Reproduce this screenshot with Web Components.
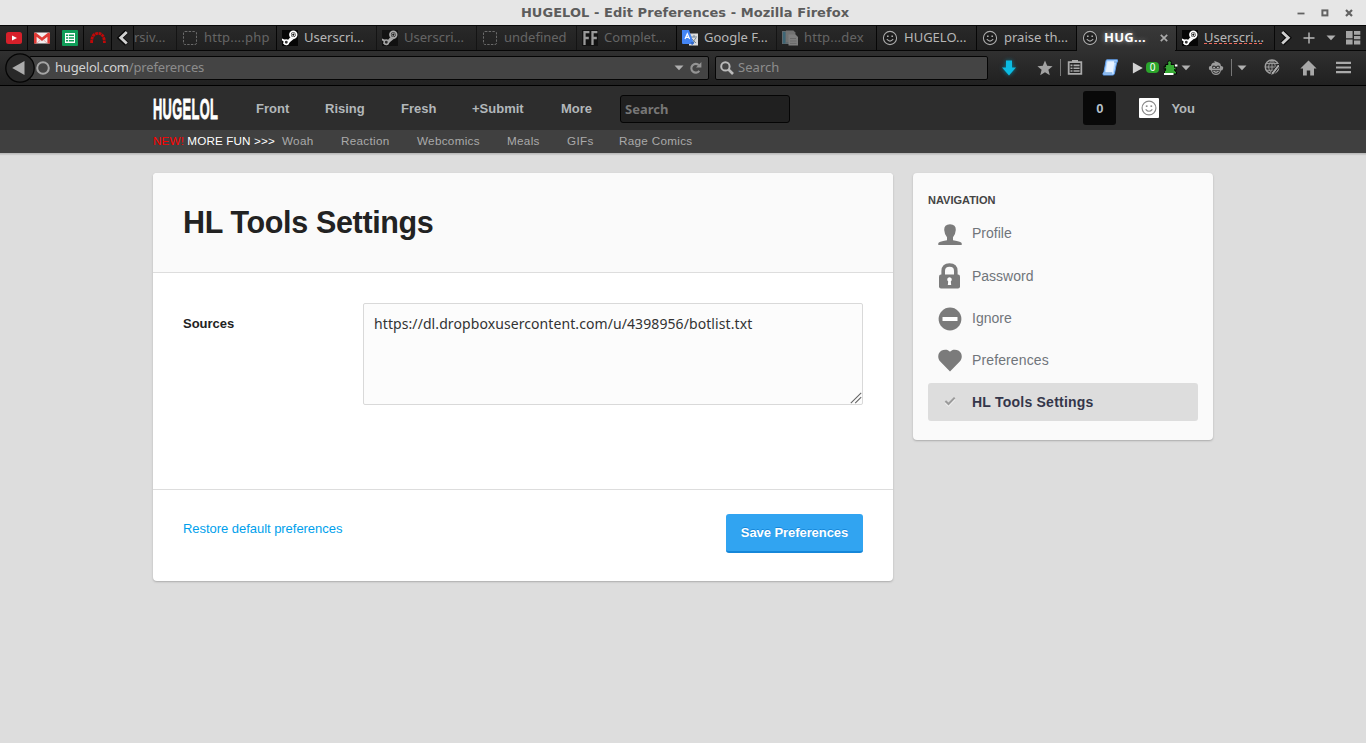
<!DOCTYPE html>
<html lang="en">
<head>
<meta charset="utf-8">
<title>HUGELOL - Edit Preferences</title>
<style>
html,body{margin:0;height:100%;overflow:hidden;background:#ddd;font-family:"Liberation Sans",Arial,sans-serif}
body{display:flex;flex-direction:column;width:1366px;height:743px}
</style>
</head>
<body>
<browser-chrome></browser-chrome>
<site-header></site-header>
<site-page></site-page>
<script>
const smile = '<circle cx="8" cy="8" r="6.6" fill="none" stroke="currentColor" stroke-width="1.1"/><rect x="5" y="5.5" width="1.6" height="1.5" fill="currentColor"/><rect x="9.4" y="5.5" width="1.6" height="1.5" fill="currentColor"/><path d="M4.8 9.2Q8 13 11.2 9.2" fill="none" stroke="currentColor" stroke-width="1.1"/>';
const ICONS = {
  youtube:[16,16,'<rect y="2" width="16" height="12" rx="2.5" fill="#d7202a"/><path d="M6 5.5 11 8 6 10.5Z" fill="#fff"/>'],
  gmail:[16,16,'<rect y="2.5" width="16" height="11" rx="1" fill="#f3eeee"/><path d="M0 3.5V13.5H2.6V6.8L8 11 13.4 6.8V13.5H16V3.5Q15 2 13.7 3L8 7.6 2.3 3Q1 2 0 3.5Z" fill="#df3a35"/><path d="M2.8 13.3 6.4 10M13.2 13.3 9.6 10" stroke="#d99" stroke-width=".8"/>'],
  sheets:[16,16,'<rect width="16" height="16" rx="1" fill="#109d58"/><rect x="3" y="3" width="10" height="10" fill="#fff"/><path d="M4 5.2h2.2M7 5.2h5M4 8h2.2M7 8h5M4 10.8h2.2M7 10.8h5" stroke="#109d58" stroke-width="1.5"/>'],
  arch:[16,16,'<path d="M1.6 13C1.6 6 4 3.4 8 3.4S14.4 6 14.4 13" fill="none" stroke="#c00808" stroke-width="2.8" stroke-dasharray="2.8 .6"/>'],
  prev:[12,16,'<path d="M9.8 1.5 3.2 7.8 9.8 14" fill="none" stroke="#080808" stroke-width="5"/><path d="M9.8 2 3.7 7.8 9.8 13.6" fill="none" stroke="#d0d0d0" stroke-width="2.8"/>'],
  next:[12,16,'<path d="M2.2 2 8.3 7.8 2.2 13.6" fill="none" stroke="#080808" stroke-width="5"/><path d="M2.2 2 8.3 7.8 2.2 13.6" fill="none" stroke="#d0d0d0" stroke-width="2.8"/>'],
  dotted:[16,16,'<rect x="1.5" y="1.5" width="13" height="13" rx="1.5" fill="none" stroke="#999" stroke-dasharray="2.4 1.3"/>'],
  steam:[16,16,'<rect width="16" height="16" fill="#060606"/><path d="M0 8.4 5.4 10.8 8 7.5 11.7 9 7.8 12.2 5 15.2 1 13.4 3 11.8 0 10.4Z" fill="#fff"/><circle cx="11.3" cy="4.7" r="3.3" fill="#111" stroke="#fff" stroke-width="1.8"/><circle cx="11.3" cy="4.7" r="1.5" fill="none" stroke="#fff"/><circle cx="4.3" cy="12.3" r="2.2" fill="#333" stroke="#fff" stroke-width="1.5"/>'],
  ff:[16,16,'<rect width="16" height="16" fill="#080808"/><path d="M2.5 15V2.1H7.4M2.5 8H6.8M10.5 15V2.1H15.4M10.5 8H14.8" fill="none" stroke="#e8e8e8" stroke-width="2.3"/>'],
  translate:[16,16,'<rect x="7" y="3.5" width="9" height="12" fill="#ddd"/><path d="M9 7h6M12 5v2M10 9l4 4M14 8l-4 5" stroke="#758693" stroke-width="1" fill="none"/><path d="M0 0H7L12 14H1Q0 14 0 13Z" fill="#4485f4"/><path d="M8.5 12 12.5 12 10 15.5Z" fill="#356ac3"/><path d="M3 9 5.3 3.8 7.6 9M3.8 7.4H6.8" stroke="#fff" stroke-width="1.2" fill="none"/>'],
  page:[16,16,'<path d="M0 1h11v13H0z" fill="#8a9aa2"/><path d="M1 2h2.4v11.5H1z" fill="#4f91aa"/><path d="M4 .6h7.4l2 2V12H4z" fill="#a5a5a5"/><path d="M6.5 4.5h7L16 7v8.6H6.5z" fill="#bbb"/><path d="M8 8.5h6M8 11h6.5M8 13.4h6.5" stroke="#999" stroke-width="1"/>'],
  smile:[16,16,'<circle cx="8" cy="8" r="7.6" fill="#191919" opacity=".7"/>'+smile],
  avatar:[20,20,'<rect width="20" height="20" rx="1" fill="#fff"/><g transform="translate(1.6 1.6) scale(1.05)" color="#8a8a8a">'+smile+'</g>'],
  close:[10,10,'<path d="M1.8 1.8 8.2 8.2M8.2 1.8 1.8 8.2" stroke="#aaa" stroke-width="1.7"/>'],
  plus:[12,12,'<path d="M6 .5V11.5M.5 6H11.5" stroke="#bbb" stroke-width="1.4"/>'],
  caret:[10,6,'<path d="M.5.5H9.5L5 5.2Z" fill="#b0b0b0"/>'],
  groups:[16,16,'<path d="M1 1h6.6v7.3H1zM9 1h6.3v3.8H9zM9 6h6.3v3.2H9zM1 9.6h6.6v5H1zM9 10.4h6.3v4.2H9z" fill="#a5a5a5"/>'],
  back:[30,30,'<circle cx="15" cy="15" r="14.2" fill="#292929" stroke="#050505" stroke-width="1.3"/><path d="M7.2 15 19.5 8V22Z" fill="#ababab"/>'],
  ring:[16,16,'<circle cx="8" cy="8" r="5.8" fill="none" stroke="#a5a5a5" stroke-width="2"/>'],
  reload:[12,12,'<path d="M9.3 8.8A4.4 4.4 0 1 1 9 3.3" fill="none" stroke="#949494" stroke-width="2.1"/><path d="M11.4 0V5.6H6Z" fill="#949494"/>'],
  search:[14,14,'<circle cx="5.4" cy="5.4" r="4.2" fill="none" stroke="#bbb" stroke-width="2"/><path d="M8.5 8.5 13 13" stroke="#bbb" stroke-width="2.7"/>'],
  down:[18,18,'<path d="M6 1.5h6v7h4L9 16.5 2 8.5h4z" fill="#0bbbe2"/>'],
  star:[16,16,'<path d="M8 .6 10.2 5.8 15.6 6.2 11.4 9.8 12.8 15.2 8 12.2 3.2 15.2 4.6 9.8 .4 6.2 5.8 5.8Z" fill="#a2a2a2"/>'],
  clip:[16,17,'<path d="M1.7 3.2h12.6v11.6H1.7z" fill="#222" stroke="#aaa" stroke-width="1.8"/><path d="M5 1h6v3H5z" fill="#aaa"/><path d="M3.5 6.4h2M6.5 6.4H12.6M3.5 9.2h2M6.5 9.2H12.6M3.5 12h2M6.5 12H12.6" stroke="#aaa" stroke-width="1.6"/>'],
  scroll:[17,17,'<path d="M4 2Q4 .8 5 .8H15.5Q16 3 14.5 4L12.4 14.8Q12 16 10.8 16H1.2Q.4 14 2 13Z" fill="#b5d8ff" stroke="#5d9ded"/><path d="M5.5 2.5h7L10.8 13.4H3.8z" fill="#e7f2ff"/><path d="M12 3h3M2 14h8" stroke="#699ed7"/>'],
  play:[11,12,'<path d="M.9.5 10.8 6 .9 11.5Z" fill="#d2d2d2"/>'],
  puzzle:[16,16,'<path d="M5 4.5 4.6 2.6Q4.6.8 6.5.8T8.4 2.6L8 4.5H11.5V7.5L13 6.5V10.5L11.5 9.5V10.4L13.5 12V14H1.5V11.5L2.6 10V8.5L1.2 9.4V6L2.6 7V4.5Z" fill="#37aa35" stroke="#050505"/><path d="M1 13H10.5V15H1zM11.8 4.4h2.6v2.2h-2.6z" fill="#fff"/>'],
  monkey:[16,16,'<path d="M3 6Q3 2.7 7 2.4L6 .7 10.5 2.6Q13 3.5 13 6Q16 6.3 15 9Q14.5 10.5 13 10.5 12 15 8 15T3 10.5Q.7 10.4.8 8T3 6Z" fill="#9b9b9b"/><path d="M4.2 6Q6 5 8 6.4 10 5 11.8 6V8.6H4.2ZM4 10.3h8Q11.4 13.8 8 13.8T4 10.3Z" fill="#333"/><path d="M5.3 7.4h1.6M9.1 7.4h1.6M5.5 11.5Q8 13 10.5 11.5" stroke="#ccc" fill="none"/>'],
  globe:[17,17,'<circle cx="8" cy="7.8" r="6.8" fill="#333" stroke="#a0a0a0" stroke-width="1.4"/><path d="M1 8h14M8 1v13M2.5 4.5h11M2.5 11.3h8M8 1Q1 8 8 14.5M8 1Q15 8 8 14.5" fill="none" stroke="#a0a0a0" stroke-width=".9"/><path d="M14 5 7.5 13.5 6.5 16.5 9.5 15.5 16 7Z" fill="#aaa" stroke="#222"/>'],
  home:[17,16,'<path d="M8.5.6 16.6 8.6H14V15.4H10.2V10.6H6.8V15.4H3V8.6H.4Z" fill="#a8a8a8"/>'],
  menu:[15,13,'<path d="M0 1.8h15M0 6.5h15M0 11.2h15" stroke="#aaa" stroke-width="2.2"/>'],
  wmin:[8,8,'<path d="M.5 4.5h7" stroke="#626262" stroke-width="1.8"/>'],
  wmax:[8,8,'<rect x="1.4" y="1.4" width="5" height="5" fill="none" stroke="#626262" stroke-width="2"/>'],
  wclose:[8,8,'<path d="M1 1 7 7M7 1 1 7" stroke="#626262" stroke-width="2.2"/>'],
  profile:[24,24,'<path d="M6.2 7Q6 1.4 12 1.3 18 1.4 17.8 7 17.5 11.5 15 14.2V17.2Q23.7 18.6 23.7 20.2V22H.3V20.2Q.3 18.6 9 17.2V14.2Q6.5 11.5 6.2 7Z" fill="#7b7b7b"/>'],
  lock:[24,26,'<path d="M5.2 13V8Q5.2 2 11.5 2T17.8 8V13" fill="none" stroke="#7b7b7b" stroke-width="3.6"/><rect x="1" y="11.6" width="21" height="13.8" rx="2" fill="#7b7b7b"/><path d="M11.5 14.2a2.3 2.3 0 0 1 1.3 4.2L13.2 22H9.8L10.2 18.4A2.3 2.3 0 0 1 11.5 14.2Z" fill="#fff"/>'],
  ignore:[24,24,'<circle cx="12" cy="12" r="11.4" fill="#7b7b7b"/><rect x="4.5" y="10" width="15" height="4" fill="#fff"/>'],
  heart:[24,24,'<path d="M12 2.7C14 .2 18 .1 20.8 1.8 24.4 4.4 24.6 9 22 12.2L12 22.4 2 12.2C-.6 9-.4 4.4 3.2 1.8 6 .1 10 .2 12 2.7Z" fill="#7b7b7b"/>'],
  check:[24,24,'<path d="M7.4 11.5 10.5 14.5 16.7 8.1" fill="none" stroke="#eee" stroke-width="2" transform="translate(0 1)"/><path d="M7.4 11 10.5 14 16.7 7.6" fill="none" stroke="#9b9b9b" stroke-width="2"/>'],
  grip:[12,12,'<path d="M.8 11.2 11.2.8M5.2 11.2 11.2 5.2" stroke="#666" stroke-width="1.1"/>']
};
const define = (name, render) => customElements.define(name, class extends HTMLElement {
  constructor(){ super(); this.attachShadow({mode:'open'}); }
  connectedCallback(){ this.shadowRoot.innerHTML = render(this); }
});

define('ui-icon', el => {
  const [w,h,body] = ICONS[el.getAttribute('name')];
  return `<style>:host{display:block;flex:none;width:${w}px;height:${h}px}svg{display:block}</style><svg width="${w}" height="${h}" viewBox="0 0 ${w} ${h}">${body}</svg>`;
});

define('browser-tab', el => `<style>
:host{display:flex;box-sizing:border-box;flex:none;width:100px;height:24px;align-items:center;gap:6px;padding-left:5px;border-left:1px solid #060606;color:#b7b7b7;background:linear-gradient(#292929,#202020);font:13px "Noto Sans",sans-serif;white-space:nowrap;overflow:hidden}
:host([dim]){color:#656565;border-color:#141414}
:host([dim]) ui-icon{opacity:.6}
:host([pin]){width:28px;border-left:0;border-right:1px solid #080808}
:host([active]){background:linear-gradient(#393939,#303030);color:#fff;font-weight:bold;text-shadow:0 0 5px #aaa}
:host([active]) span{letter-spacing:.3px}
:host([unread]) span{background:repeating-linear-gradient(90deg,#ef6a5c 0 3px,transparent 3px 5px) 0 17px/100% 1px no-repeat}
span{display:block;line-height:22px;height:24px}
ui-icon{color:#aaa}
ui-icon.x{margin-left:auto;margin-right:7px}
</style>${el.hasAttribute('icon')?`<ui-icon name="${el.getAttribute('icon')}"></ui-icon>`:''}${el.hasAttribute('pin')?'':'<span><slot></slot></span>'}${el.hasAttribute('active')?'<ui-icon class="x" name="close"></ui-icon>':''}`);

define('tab-strip', () => `<style>
:host{display:flex;height:24px;background:#070707;padding-top:1px;overflow:hidden}
browser-tab[pin]{padding-left:6px}
.scroll{display:flex;box-sizing:border-box;align-items:center;justify-content:center;width:22px;height:24px;background:#252525;border-right:1px solid #080808}
.cut{width:42px;padding-left:0;border:0}
.end{display:flex;flex:1;align-items:center;height:24px;background:#252525;border-left:1px solid #080808;padding-left:5px}
.end ui-icon:nth-child(2){margin-left:11px}.end ui-icon:nth-child(3){margin-left:11px}.end ui-icon:nth-child(4){margin-left:9px}
</style>
<browser-tab pin icon="youtube"></browser-tab><browser-tab pin icon="gmail"></browser-tab><browser-tab pin icon="sheets"></browser-tab><browser-tab pin icon="arch"></browser-tab>
<div class="scroll"><ui-icon name="prev"></ui-icon></div>
<browser-tab dim class="cut">rsiv...</browser-tab>
<browser-tab dim icon="dotted" style="letter-spacing:.2px">http....php</browser-tab><browser-tab icon="steam">Userscri...</browser-tab><browser-tab dim icon="steam">Userscri...</browser-tab><browser-tab dim icon="dotted">undefined</browser-tab><browser-tab dim icon="ff">Complet...</browser-tab><browser-tab icon="translate">Google F...</browser-tab><browser-tab dim icon="page" style="letter-spacing:.2px">http...dex</browser-tab><browser-tab icon="smile">HUGELO...</browser-tab><browser-tab icon="smile">praise th...</browser-tab><browser-tab active icon="smile">HUG...</browser-tab><browser-tab unread icon="steam" style="width:98px">Userscri...</browser-tab>
<div class="end"><ui-icon name="next"></ui-icon><ui-icon name="plus"></ui-icon><ui-icon name="caret"></ui-icon><ui-icon name="groups"></ui-icon></div>`);

define('nav-toolbar', () => `<style>
:host{display:flex;box-sizing:border-box;height:35px;background:linear-gradient(#303030,#202020);border-bottom:1px solid #000;padding:0 0 1px 5px;align-items:center;font:13px "Noto Sans",sans-serif;color:#d2d2d2}
.back{margin-right:-6px;z-index:1}
.field{display:flex;align-items:center;box-sizing:border-box;height:24px;background:#444;border:1px solid #050505;border-radius:2px}
.url{width:680px;padding-left:5px}
.url span,.find span{padding-left:4px}
.url span{letter-spacing:-.17px;line-height:21px;height:22px}
.find span{line-height:21px;height:22px;letter-spacing:.05px}
.url i{font-style:normal;color:#8c8c8c}
.url .c{margin-left:auto;margin-right:6px}.url .r{margin-right:6px}
.find{width:273px;margin-left:6px;padding-left:4px;color:#8d8d8d}
.tools{display:grid;grid-template-columns:37px 30px 35px 30px 14px 17px 18px 27px 23px 33px 36px 36px 28px;align-items:center;margin-left:12px}
.glow{filter:drop-shadow(0 0 2px #087d99)}
.div{border-left:1px solid #777;height:17px;padding-left:5px;display:flex;align-items:center}
.bar{position:relative}
.bar::before{content:"";position:absolute;left:-7px;top:0;width:1px;height:17px;background:#777}
b{display:block;width:13px;height:11px;line-height:11px;border-radius:4px;background:#2ba52b;color:#fff;text-align:center;font-size:10px;font-weight:normal}
</style>
<ui-icon class="back" name="back"></ui-icon>
<div class="field url"><ui-icon name="ring"></ui-icon><span>hugelol.com<i>/preferences</i></span><ui-icon class="c" name="caret"></ui-icon><ui-icon class="r" name="reload"></ui-icon></div>
<div class="field find"><ui-icon name="search"></ui-icon><span>Search</span></div>
<div class="tools"><ui-icon class="glow" name="down"></ui-icon><ui-icon name="star"></ui-icon><div class="bar"><ui-icon name="clip"></ui-icon></div><ui-icon name="scroll"></ui-icon><ui-icon name="play"></ui-icon><b>0</b><ui-icon name="puzzle"></ui-icon><ui-icon name="caret"></ui-icon><ui-icon name="monkey"></ui-icon><div class="div"><ui-icon name="caret"></ui-icon></div><ui-icon name="globe"></ui-icon><ui-icon name="home"></ui-icon><ui-icon name="menu"></ui-icon></div>`);

define('browser-chrome', () => `<style>
:host{display:block;flex:none;height:86px}
.title{display:grid;grid-template-columns:1fr auto 1fr;align-items:center;height:25px;background:#e6e6e6;color:#5c5c5c;font:bold 13px/25px "DejaVu Sans",sans-serif;padding-left:4px}
.title h1{grid-column:2;margin:0;font:inherit;letter-spacing:.05px}
.win{display:flex;justify-content:flex-end;gap:16px;padding-right:13px}
.seam{height:1px;background:linear-gradient(90deg,#070707 1077px,#303030 1077px 1175px,#070707 1175px)}
</style><div class="title"><h1>HUGELOL - Edit Preferences - Mozilla Firefox</h1><div class="win"><ui-icon name="wmin"></ui-icon><ui-icon name="wmax"></ui-icon><ui-icon name="wclose"></ui-icon></div></div>
<tab-strip></tab-strip><div class="seam"></div><nav-toolbar></nav-toolbar>`);

define('site-header', () => `<style>
:host{display:block;flex:none;background:#404040;box-shadow:0 1px 1px #bbb,0 2px 1px #ccc}
.top{height:44px;background:#2d2d2d;display:flex;align-items:center;padding:0 171px 0 153px}
.logo{width:65px;height:29px;flex:none;overflow:visible}
nav{display:grid}
.main{grid-template-columns:69px 76px 71px 89px 59px;margin-left:38px;font-weight:bold;font-size:13px;color:#b2b7ba}
.find{box-sizing:border-box;width:170px;height:28px;background:#202020;border:1px solid #050505;border-radius:3px;padding-left:4px;color:#777;font:bold 13px/27px "Noto Sans",sans-serif;margin-top:1px}
.count{width:33px;height:34px;border-radius:3px;background:#090909;margin-left:auto;margin-right:23px;text-align:center;font:bold 13px/36px "Liberation Sans",sans-serif;color:#b8c3cc}
.you{margin-left:12px;font:bold 13px "Liberation Sans",sans-serif;color:#b2b7ba}
.sub{height:23px;line-height:22px;display:flex;padding-left:153px;font-size:11.7px;color:#aaa;white-space:nowrap}
.promo{width:129px;color:#fff;letter-spacing:.12px}.promo em{font-style:normal;color:red}
.sub nav{grid-template-columns:59px 76px 90px 60px 52px 100px;letter-spacing:.3px}
</style><div class="top"><svg class="logo" viewBox="0 0 65 29"><text x="0" y="25" font-family="Liberation Sans" font-weight="bold" font-size="29.5" fill="#fff" stroke="#fff" stroke-width=".8" textLength="149" lengthAdjust="spacing" transform="scale(.435 1)">HUGELOL</text></svg>
<nav class="main"><span>Front</span><span>Rising</span><span>Fresh</span><span>+Submit</span><span>More</span></nav><div class="find">Search</div><div class="count">0</div><ui-icon name="avatar"></ui-icon><span class="you">You</span></div>
<div class="sub"><div class="promo"><em>NEW!</em> MORE FUN &gt;&gt;&gt;</div><nav><span>Woah</span><span>Reaction</span><span>Webcomics</span><span>Meals</span><span>GIFs</span><span>Rage Comics</span></nav></div>`);

define('settings-card', () => `<style>
:host{display:block;box-sizing:border-box;width:740px;height:408px;background:#fff;border-radius:4px;box-shadow:0 1px 2px #aaa;overflow:hidden;color:#222}
header{box-sizing:border-box;height:100px;background:#fafafa;border-bottom:1px solid #ddd;padding:0 30px}
h2{margin:0;font-size:30.5px;line-height:99px;letter-spacing:-.35px}
.body{display:grid;grid-template-columns:180px 500px;height:186px;padding:30px 30px 0}
label{font:bold 13px/42px "Liberation Sans",sans-serif}
.area{position:relative;height:102px}
.area ui-icon{position:absolute;right:1px;bottom:1px}
textarea{display:block;box-sizing:border-box;width:500px;height:102px;margin:0;border:1px solid #d9d9d9;border-radius:2px;background:#fcfcfc;padding:10px;font:14px/20px "Noto Sans",sans-serif;letter-spacing:.085px;color:#333;resize:none;outline:0}
footer{display:flex;justify-content:space-between;border-top:1px solid #ddd;padding:24px 30px}
a{color:#009fec;font-size:13px;line-height:30px;letter-spacing:-.04px}
button{width:137px;height:39px;box-sizing:border-box;padding:0;border:0;border-bottom:2px solid #1687d9;border-radius:3px;background:#31a4f1;color:#fff;font:bold 13px "Liberation Sans",sans-serif;letter-spacing:-.07px;text-shadow:0 -1px #1687d9}
</style><header><h2>HL Tools Settings</h2></header><div class="body"><label>Sources</label><div class="area"><textarea spellcheck="false">https://dl.dropboxusercontent.com/u/4398956/botlist.txt</textarea><ui-icon name="grip"></ui-icon></div></div><footer><a>Restore default preferences</a><button>Save Preferences</button></footer>`);

define('nav-item', el => `<style>
:host{display:flex;box-sizing:border-box;height:38px;align-items:center;padding-left:10px;gap:10px;color:#70757a;font-size:14px;border-radius:3px}
:host([selected]){background:#ddd;color:#34364a;font-weight:bold;letter-spacing:.23px}
.ic{display:flex;width:24px;justify-content:center}
span{display:block;line-height:38px;letter-spacing:inherit}
:host([icon=profile]) span{line-height:36px;height:38px}
:host([icon=heart]) span{letter-spacing:.12px}
:host(:not([selected])) .ic{padding-top:2px}
:host([icon=lock]) .ic{padding-top:0;margin-top:-1px}
:host([icon=heart]) .ic{padding-top:1px}
</style><div class="ic"><ui-icon name="${el.getAttribute('icon')}"></ui-icon></div><span><slot></slot></span>`);

define('side-nav', () => `<style>
:host{display:block;box-sizing:border-box;width:300px;height:267px;background:#fafafa;border-radius:4px;box-shadow:0 1px 2px #aaa;padding:20px 15px}
h3{margin:0;font-size:11px;line-height:15px;color:#444}
.list{display:grid;gap:4px;margin-top:7px}
</style><h3>NAVIGATION</h3><div class="list"><nav-item icon="profile">Profile</nav-item><nav-item icon="lock">Password</nav-item><nav-item icon="ignore">Ignore</nav-item><nav-item icon="heart">Preferences</nav-item><nav-item selected icon="check">HL Tools Settings</nav-item></div>`);

define('site-page', () => `<style>:host{display:flex;align-items:flex-start;gap:20px;padding:20px 153px}</style><settings-card></settings-card><side-nav></side-nav>`);
</script>
</body>
</html>
